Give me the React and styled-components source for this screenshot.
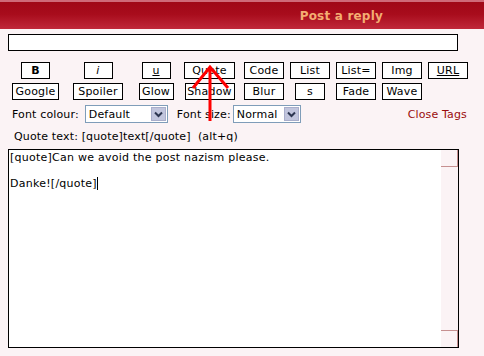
import React from "react";
import styled, { createGlobalStyle } from "styled-components";

const GlobalStyle = createGlobalStyle`
  html, body {
    margin: 0;
    padding: 0;
    background: #fbf3f5;
  }
  body {
    font-family: Verdana, "DejaVu Sans", sans-serif;
    font-size: 11px;
    color: #000;
  }
`;

const Page = styled.div`
  position: relative;
  width: 484px;
  height: 356px;
  overflow: hidden;
`;

const Header = styled.div`
  height: 27px;
  border-top: 2px solid #cf6a78;
  background: linear-gradient(#a00816 0%, #a80c1c 45%, #c0283a 100%);
  display: flex;
  align-items: center;
  justify-content: flex-end;
  padding-right: 101px;
`;

const Title = styled.span`
  font-weight: bold;
  font-size: 12px;
  color: #f4ae72;
  letter-spacing: 0.2px;
`;

const Content = styled.div`
  padding: 5px 8px 0;
`;

const Subject = styled.div`
  width: 448px;
  height: 15px;
  border: 1px solid #000;
  background: #fff;
`;

const ButtonGrid = styled.div`
  display: grid;
  grid-template-columns: 55px 70px 46px 61px 48px 44px 48px 44px 48px;
  row-gap: 4px;
  justify-items: center;
  margin-top: 11px;
`;

const TagButton = styled.div`
  box-sizing: border-box;
  width: ${(p) => p.$w}px;
  height: 17px;
  border: 1px solid #000;
  background: #fff;
  display: flex;
  align-items: center;
  justify-content: center;
  letter-spacing: 0.2px;
  font-weight: ${(p) => (p.$bold ? "bold" : "normal")};
  font-style: ${(p) => (p.$italic ? "italic" : "normal")};
  text-decoration: ${(p) => (p.$under ? "underline" : "none")};
  grid-column: ${(p) => p.$col};
`;

const FontRow = styled.div`
  display: flex;
  align-items: center;
  height: 18px;
  margin-top: 5px;
  padding-left: 4px;
  padding-right: 9px;
  letter-spacing: 0.15px;
`;

const Label = styled.span`
  margin-right: ${(p) => p.$gap}px;
`;

const Select = styled.div`
  box-sizing: border-box;
  width: ${(p) => p.$w}px;
  height: 18px;
  border: 1px solid #7f9db9;
  background: #fff;
  display: flex;
  align-items: center;
  justify-content: space-between;
  padding-left: 3px;
  margin-right: ${(p) => p.$gap}px;
`;

const SelectArrow = styled.div`
  width: 15px;
  height: 14px;
  margin-right: 1px;
  background: #c1c5dd;
  border: 1px solid #a9aecb;
  box-sizing: border-box;
  display: flex;
  align-items: center;
  justify-content: center;
`;

const CloseTags = styled.span`
  margin-left: auto;
  color: #9a0c0c;
`;

const Hint = styled.div`
  margin-top: 7px;
  padding-left: 6px;
  line-height: 13px;
  white-space: pre;
  letter-spacing: 0.15px;
`;

const Editor = styled.div`
  box-sizing: border-box;
  width: 451px;
  height: 199px;
  margin-top: 6px;
  border: 1px solid #000;
  display: flex;
`;

const EditorText = styled.div`
  flex: 1;
  background: #fff;
  padding: 1px;
  line-height: 13px;
  white-space: pre;
  letter-spacing: 0.25px;
`;

const Caret = styled.span`
  display: inline-block;
  width: 1px;
  height: 13px;
  background: #000;
  vertical-align: top;
`;

const Scrollbar = styled.div`
  width: 17px;
  display: flex;
  flex-direction: column;
  justify-content: space-between;
`;

const ScrollButton = styled.div`
  height: 16px;
  border-right: 1px solid #c69090;
  border-${(p) => (p.$top ? "bottom" : "top")}: 1px solid #c69090;
`;

const Arrow = styled.svg`
  position: absolute;
  left: 0;
  top: 0;
  pointer-events: none;
`;

const row1 = [
  { t: "B", w: 29, bold: true },
  { t: "i", w: 29, italic: true },
  { t: "u", w: 29, under: true },
  { t: "Quote", w: 51 },
  { t: "Code", w: 40 },
  { t: "List", w: 40 },
  { t: "List=", w: 40 },
  { t: "Img", w: 40 },
  { t: "URL", w: 40, under: true },
];

const row2 = [
  { t: "Google", w: 47 },
  { t: "Spoiler", w: 50 },
  { t: "Glow", w: 35 },
  { t: "Shadow", w: 50 },
  { t: "Blur", w: 40 },
  { t: "s", w: 30 },
  { t: "Fade", w: 40 },
  { t: "Wave", w: 40 },
];

const Chevron = () => (
  <svg width="9" height="7" viewBox="0 0 9 7">
    <path d="M1 1.5 L4.5 5 L8 1.5" fill="none" stroke="#2c3550" strokeWidth="2" />
  </svg>
);

export default function App() {
  return (
    <Page>
      <GlobalStyle />
      <Header>
        <Title>Post a reply</Title>
      </Header>
      <Content>
        <Subject />
        <ButtonGrid>
          {row1.map((b, i) => (
            <TagButton key={b.t} $w={b.w} $bold={b.bold} $italic={b.italic} $under={b.under} $col={i + 1}>
              {b.t}
            </TagButton>
          ))}
          {row2.map((b, i) => (
            <TagButton key={b.t} $w={b.w} $col={i + 1}>
              {b.t}
            </TagButton>
          ))}
        </ButtonGrid>
        <FontRow>
          <Label $gap={6}>Font colour:</Label>
          <Select $w={83} $gap={9}>
            Default
            <SelectArrow>
              <Chevron />
            </SelectArrow>
          </Select>
          <Label $gap={2}>Font size:</Label>
          <Select $w={68} $gap={0}>
            Normal
            <SelectArrow>
              <Chevron />
            </SelectArrow>
          </Select>
          <CloseTags>Close Tags</CloseTags>
        </FontRow>
        <Hint>{"Quote text: [quote]text[/quote]  (alt+q)"}</Hint>
        <Editor>
          <EditorText>
            {"[quote]Can we avoid the post nazism please.\n\nDanke![/quote]"}
            <Caret />
          </EditorText>
          <Scrollbar>
            <ScrollButton $top />
            <ScrollButton />
          </Scrollbar>
        </Editor>
      </Content>
      <Arrow width="484" height="356">
        <path d="M210 121 L210 67 M193 88 L210 67 L228 88" fill="none" stroke="#ff0000" strokeWidth="3" />
      </Arrow>
    </Page>
  );
}
